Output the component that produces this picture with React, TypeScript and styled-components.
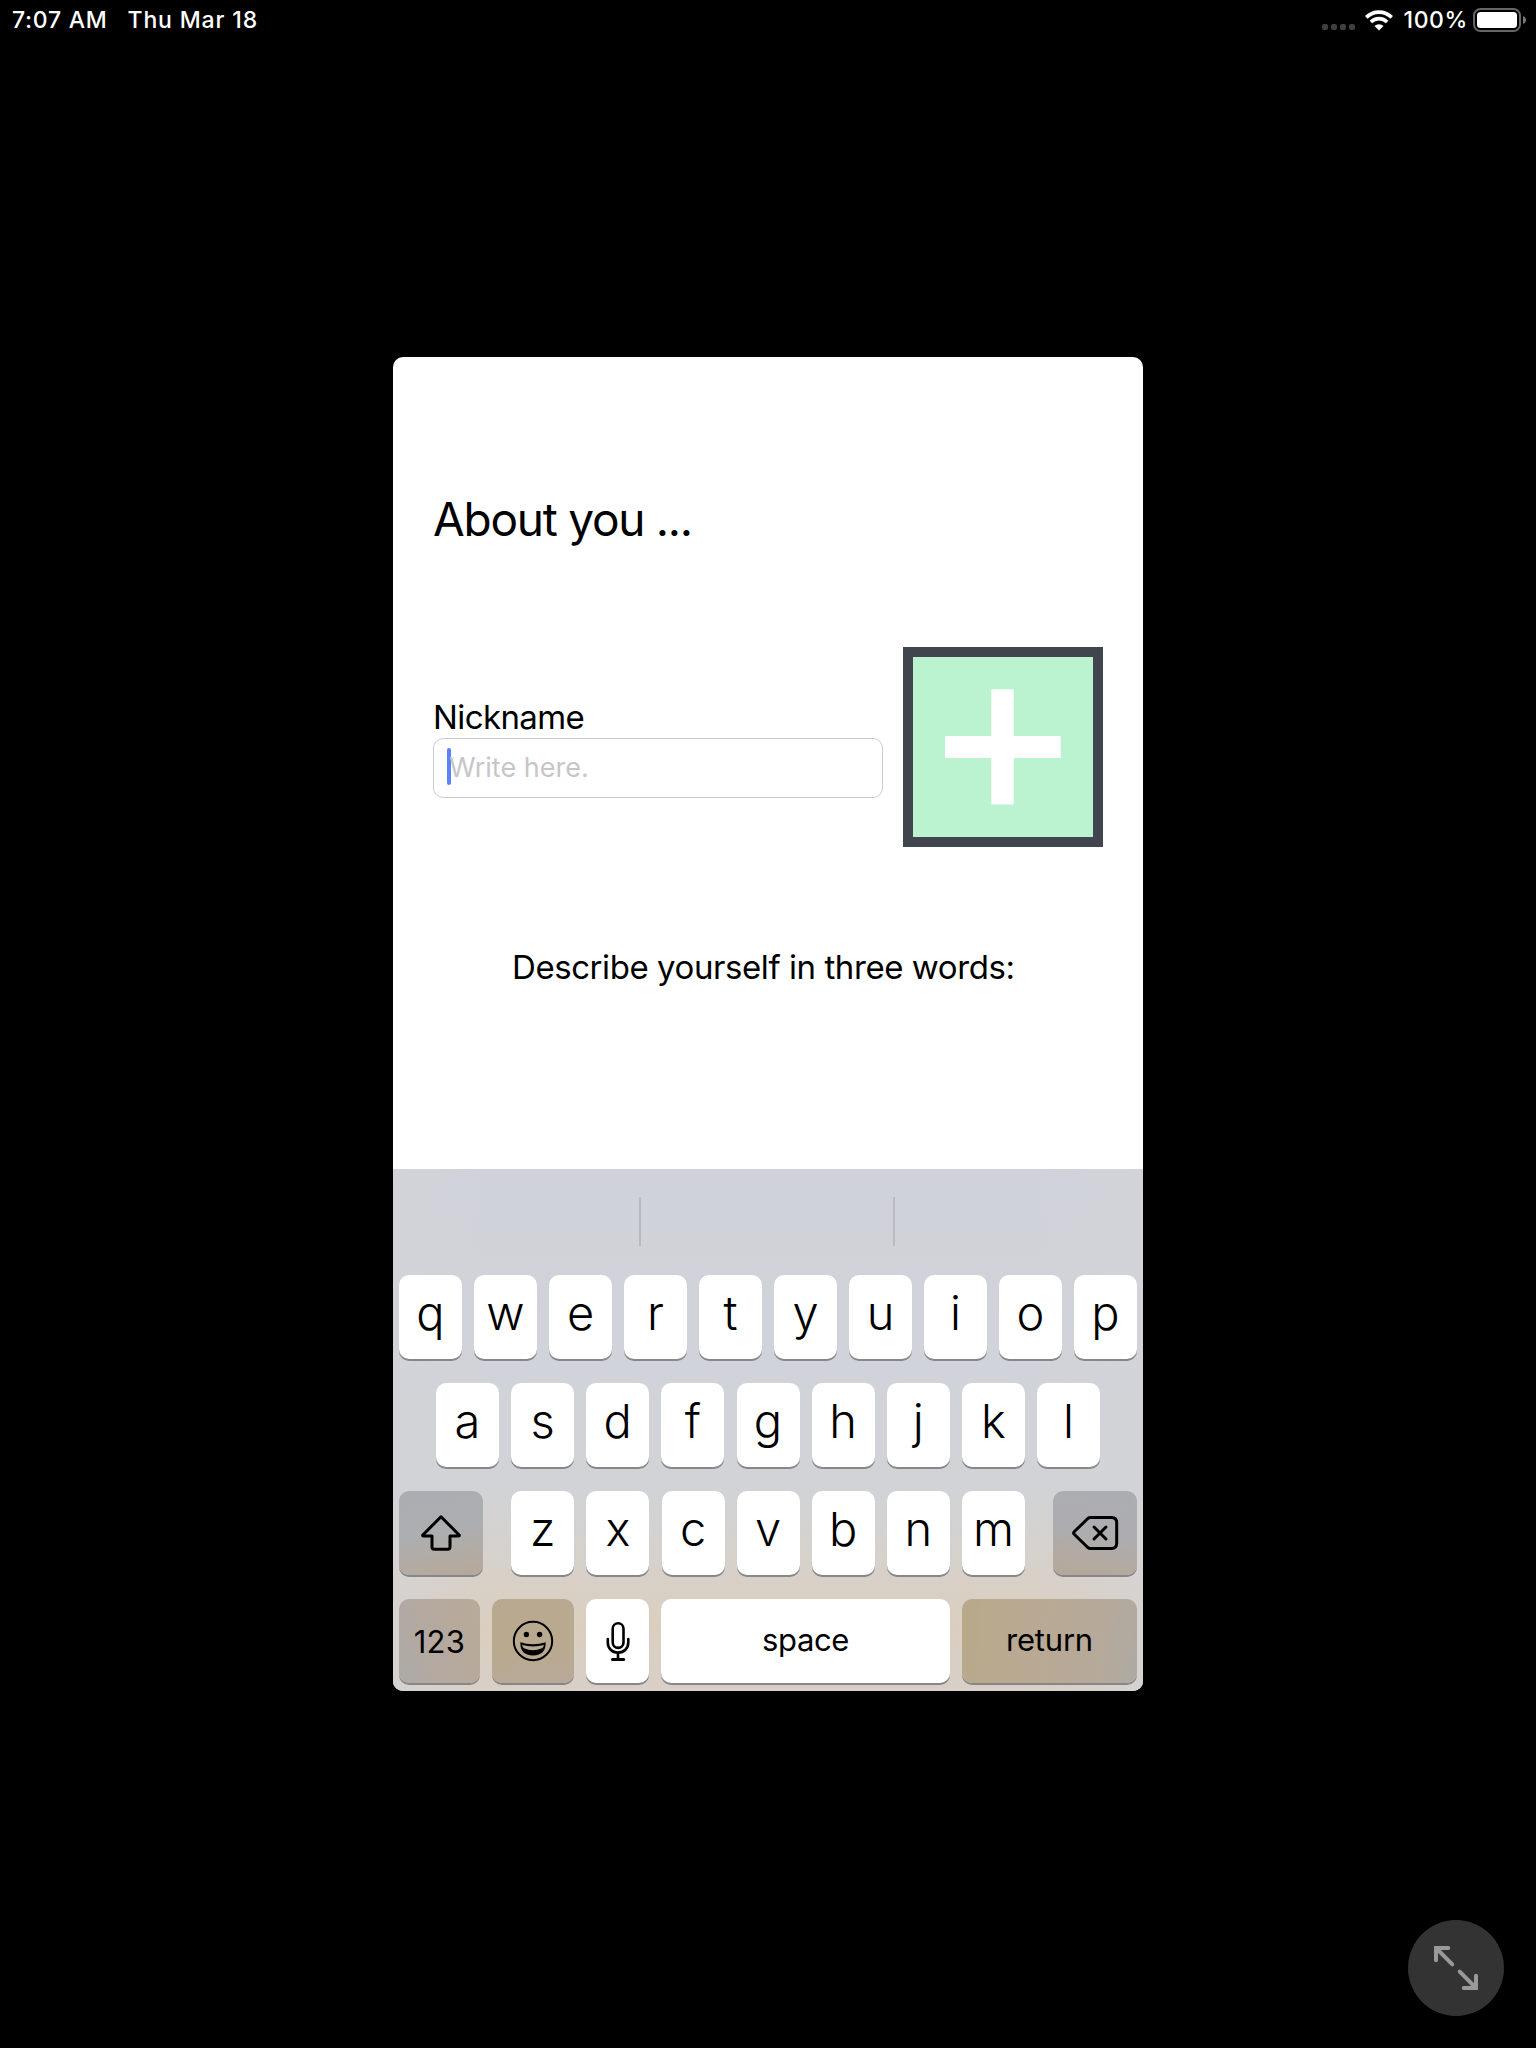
import React from "react";
import styled, { createGlobalStyle } from "styled-components";

const GlobalStyle = createGlobalStyle`
  * { box-sizing: border-box; }
  body { margin: 0; background: #000; }
`;

const Screen = styled.div`
  position: relative;
  display: flex;
  flex-direction: column;
  align-items: center;
  width: 1536px;
  height: 2048px;
  background: #000;
  font-family: Inter, "Liberation Sans", sans-serif;
  overflow: hidden;
`;

const StatusBar = styled.header`
  display: flex;
  justify-content: space-between;
  align-items: center;
  width: 100%;
  height: 40px;
  padding: 0 9px 0 12px;
  color: #fff;
  font-size: 23px;
  font-weight: 450;
`;

const StatusGroup = styled.div<{ $gap: number }>`
  display: flex;
  align-items: center;
  gap: ${(p) => p.$gap}px;
`;

const StatusText = styled.span<{ $spacing: number }>`
  line-height: 40px;
  white-space: nowrap;
  letter-spacing: ${(p) => p.$spacing}px;
`;

const Percent = styled(StatusText)`
  margin: 0 -4px 0 2px;
`;

const Dots = styled.div`
  display: flex;
  gap: 3px;
  padding-top: 14px;
  margin-right: 1px;
`;

const Dot = styled.i`
  width: 6px;
  height: 6px;
  border-radius: 2px;
  background: #3f3f3f;
`;

const Card = styled.main`
  display: flex;
  flex-direction: column;
  width: 750px;
  height: 1334px;
  margin-top: 317px;
  padding-top: 134px;
  background: #fff;
  border-radius: 10px;
  overflow: hidden;
`;

const Title = styled.h1`
  margin: 0 0 100px 40px;
  font-size: 46px;
  font-weight: 400;
  line-height: 56px;
  letter-spacing: -1.25px;
  color: #000;
`;

const Profile = styled.section`
  display: flex;
  justify-content: space-between;
  padding: 0 40px;
`;

const Field = styled.label`
  display: flex;
  flex-direction: column;
  width: 450px;
  padding-top: 50px;
`;

const Label = styled.span`
  padding-left: 0;
  margin-bottom: 1px;
  font-size: 33px;
  line-height: 40px;
  letter-spacing: -0.6px;
  color: #000;
`;

const Input = styled.div`
  display: flex;
  align-items: center;
  height: 60px;
  padding: 0 13px 3px;
  border: 1px solid #cbcbcd;
  border-radius: 10px;
`;

const Caret = styled.i`
  width: 4px;
  height: 37px;
  margin-right: -2px;
  border-radius: 2px;
  background: #5b82f7;
`;

const Placeholder = styled.span`
  padding-top: 2px;
  font-size: 27px;
  line-height: 36px;
  letter-spacing: 0;
  color: #c6c6c9;
`;

const PhotoButton = styled.div`
  display: flex;
  width: 200px;
  height: 200px;
  border: 10px solid #41464e;
  background: #bbf2cf;
`;

const Prompt = styled.p`
  margin: 100px 0 0 119px;
  font-size: 33px;
  line-height: 40px;
  letter-spacing: -0.43px;
  white-space: nowrap;
  color: #000;
`;

const Keyboard = styled.section`
  display: flex;
  flex-direction: column;
  gap: 24px;
  height: 522px;
  margin-top: auto;
  padding: 0 6px 8px;
  background:
    linear-gradient(90deg, rgba(212, 212, 216, 0.6), rgba(212, 212, 216, 0) 12%, rgba(212, 212, 216, 0) 86%, rgba(212, 212, 216, 0.6)),
    linear-gradient(180deg, #cfd2db 0, #d0d2d8 15%, #d0d3da 28%, #d0d3d8 45%, #d1d3d7 60%, #d4d2d0 70%, #d9d0c5 81%, #dacfbf 88%, #d8cfc7 100%);
`;

const Suggestions = styled.div`
  display: grid;
  grid-template-columns: 242px 254px 1fr;
  height: 49px;
  margin: 28px 0 5px;
`;

const Suggestion = styled.div<{ $divided?: boolean }>`
  border-right: ${(p) => (p.$divided ? "2px solid #b9bbc1" : "0")};
`;

const KeyRow = styled.div<{ $inset?: number }>`
  display: flex;
  justify-content: space-between;
  padding: 0 ${(p) => p.$inset ?? 0}px;
`;

const LetterGroup = styled.div`
  display: flex;
  justify-content: space-between;
  width: 514px;
  padding-left: 0.3px;
`;

const Key = styled.div<{ $w?: number; $bg?: string }>`
  display: flex;
  justify-content: center;
  width: ${(p) => p.$w ?? 63}px;
  height: 84px;
  border-radius: 10px;
  background: ${(p) => p.$bg ?? "#fff"};
  box-shadow: 0 2px 0 #87878a;
  color: #000;
`;

const Letter = styled.span`
  font-size: 47px;
  font-weight: 340;
  line-height: 76px;
`;

const KeyLabel = styled.span<{ $lh: number; $spacing?: number }>`
  font-size: 31px;
  font-weight: 400;
  line-height: ${(p) => p.$lh}px;
  letter-spacing: ${(p) => p.$spacing ?? 0}px;
`;

const ResizeButton = styled.div`
  position: absolute;
  left: 1408px;
  top: 1920px;
  width: 96px;
  height: 96px;
  border-radius: 50%;
  background: #333;
`;

const shiftBg = "linear-gradient(170deg, #acadb3 0%, #adaeb0 50%, #b3aba2 80%, #b6a899 100%)";
const deleteBg = "linear-gradient(190deg, #acadb3 0%, #adadb0 50%, #b2aaa3 75%, #b5a899 100%)";
const numbersBg = "linear-gradient(75deg, #adaaa6 0%, #b5a99f 50%, #b8ab98 100%)";
const emojiBg = "linear-gradient(175deg, #b9a992 0%, #b9a98e 55%, #b8a999 100%)";
const returnBg = "linear-gradient(95deg, #b9a98a 0%, #b9a993 40%, #b6a999 75%, #aeaaa2 100%)";

const WifiIcon = () => (
  <svg width="28" height="21" viewBox="0 0 28 21" fill="none" stroke="#fff">
    <path d="M1.3 7.4A18 18 0 0 1 26.7 7.4" strokeWidth="3.8" />
    <path d="M5.9 12A11.4 11.4 0 0 1 22.1 12" strokeWidth="3.6" />
    <path d="M14 20.6L9.5 16.1A6.4 6.4 0 0 1 18.5 16.1Z" fill="#fff" stroke="none" />
  </svg>
);

const BatteryIcon = () => (
  <svg width="54" height="24" viewBox="0 0 54 24">
    <rect x="1" y="1" width="46" height="22" rx="6.5" fill="none" stroke="#666" strokeWidth="2" />
    <rect x="4" y="4" width="40" height="16" rx="3.5" fill="#fff" />
    <path d="M50 8C52 8.8 53 10.2 53 12S52 15.200 50 16Z" fill="#777" />
  </svg>
);

const PlusIcon = () => (
  <svg width="180" height="180" viewBox="0 0 180 180" fill="#fff">
    <path d="M78.300 32.300H100.700V79H147.700V101H100.700V147.500H78.300V101H32V79H78.300Z" />
  </svg>
);

const ShiftIcon = () => (
  <svg width="84" height="84" fill="none" stroke="#000" strokeWidth="3" strokeLinejoin="round">
    <path d="M42 25.800L23.600 44.200Q23.600 45 24.500 45H33V56Q33 58.200 35.200 58.200H48.800Q51 58.200 51 56V45H59.500Q60.400 45 60.400 44.200Z" />
  </svg>
);

const DeleteIcon = () => (
  <svg width="84" height="84" fill="none" stroke="#000" strokeWidth="3" strokeLinecap="round" strokeLinejoin="round">
    <path d="M37.500 26.500H58.500Q63.700 26.500 63.700 31.700V52.300Q63.700 57.500 58.500 57.500H37.500Q36 57.500 34.800 56.500L21.200 43.200Q20 42 21.200 40.800L34.800 27.500Q36 26.500 37.500 26.500Z" />
    <path d="M41 36L53 48M53 36L41 48" />
  </svg>
);

const EmojiIcon = () => (
  <svg width="82" height="84">
    <circle cx="41" cy="42" r="19.200" fill="none" stroke="#000" strokeWidth="2" />
    <circle cx="34.400" cy="35.500" r="2.700" />
    <circle cx="47.600" cy="35.500" r="2.700" />
    <path
      fillRule="evenodd"
      d="M28.300 43.200Q41 47.400 53.700 43.200Q54 56.400 41 56.400Q28 56.400 28.300 43.200ZM30 46Q30.600 48.500 32 49.300Q41 53 50 49.300Q51.400 48.500 52 46Q41 48.800 30 46Z"
    />
  </svg>
);

const MicIcon = () => (
  <svg width="63" height="84" fill="none" stroke="#000" strokeWidth="2.600" strokeLinecap="round">
    <rect x="26.700" y="24.300" width="10.800" height="24.600" rx="5.400" />
    <path d="M21.800 40V43.500C21.800 49.500 26 53.600 32 53.600S42.300 49.500 42.300 43.500V40M32 54V60" />
    <path d="M26.500 60.500H37.700" strokeWidth="3" />
  </svg>
);

const ResizeIcon = () => (
  <svg width="96" height="96" fill="none" stroke="#999" strokeWidth="4" strokeLinecap="round" strokeLinejoin="miter">
    <path d="M40.300 28H28V40.300M28.500 28.500L44.300 44.300" />
    <path d="M55.700 68H68V55.700M67.500 67.500L51.700 51.700" />
  </svg>
);

const letterKeys = (letters: string) =>
  letters.split("").map((c) => (
    <Key key={c}>
      <Letter>{c}</Letter>
    </Key>
  ));

export default function App() {
  return (
    <Screen>
      <GlobalStyle />
      <StatusBar>
        <StatusGroup $gap={20}>
          <StatusText $spacing={0.75}>7:07 AM</StatusText>
          <StatusText $spacing={0.85}>Thu Mar 18</StatusText>
        </StatusGroup>
        <StatusGroup $gap={9}>
          <Dots>
            <Dot />
            <Dot />
            <Dot />
            <Dot />
          </Dots>
          <WifiIcon />
          <Percent $spacing={0.6}>100%</Percent>
          <BatteryIcon />
        </StatusGroup>
      </StatusBar>

      <Card>
        <Title>About you ...</Title>
        <Profile>
          <Field>
            <Label>Nickname</Label>
            <Input>
              <Caret />
              <Placeholder>Write here.</Placeholder>
            </Input>
          </Field>
          <PhotoButton>
            <PlusIcon />
          </PhotoButton>
        </Profile>
        <Prompt>Describe yourself in three words:</Prompt>

        <Keyboard>
          <Suggestions>
            <Suggestion $divided />
            <Suggestion $divided />
            <Suggestion />
          </Suggestions>
          <KeyRow>{letterKeys("qwertyuiop")}</KeyRow>
          <KeyRow $inset={37}>{letterKeys("asdfghjkl")}</KeyRow>
          <KeyRow>
            <Key $w={84} $bg={shiftBg}>
              <ShiftIcon />
            </Key>
            <LetterGroup>{letterKeys("zxcvbnm")}</LetterGroup>
            <Key $w={84} $bg={deleteBg}>
              <DeleteIcon />
            </Key>
          </KeyRow>
          <KeyRow>
            <Key $w={81} $bg={numbersBg}>
              <KeyLabel $lh={85} $spacing={0.3}>123</KeyLabel>
            </Key>
            <Key $w={82} $bg={emojiBg}>
              <EmojiIcon />
            </Key>
            <Key>
              <MicIcon />
            </Key>
            <Key $w={289}>
              <KeyLabel $lh={81} $spacing={-0.4}>space</KeyLabel>
            </Key>
            <Key $w={175} $bg={returnBg}>
              <KeyLabel $lh={81} $spacing={-0.2}>return</KeyLabel>
            </Key>
          </KeyRow>
        </Keyboard>
      </Card>

      <ResizeButton>
        <ResizeIcon />
      </ResizeButton>
    </Screen>
  );
}
